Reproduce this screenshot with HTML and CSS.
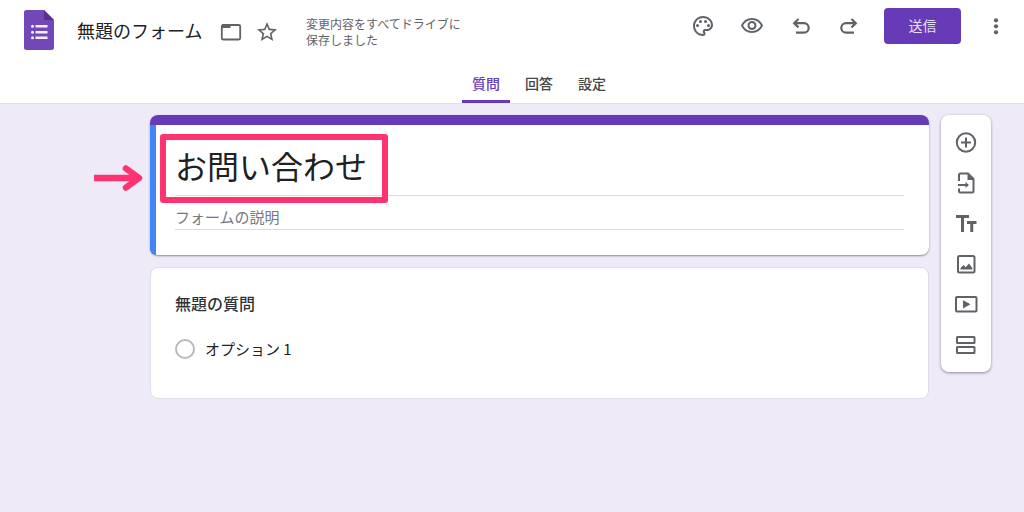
FILE: index.html
```html
<!DOCTYPE html>
<html lang="ja">
<head>
<meta charset="utf-8">
<meta name="viewport" content="width=device-width, initial-scale=1">
<title>無題のフォーム</title>
<link rel="stylesheet" href="styles.css">
</head>
<body>
<header class="header">
  <div class="topbar">
    <a class="logo" href="#" aria-label="フォームのホーム">
      <svg width="30" height="40" viewBox="0 0 30 40"><path fill="#7248b9" d="M2.500 0H20l10 10v27.500a2.500 2.500 0 0 1-2.500 2.500h-25A2.500 2.500 0 0 1 0 37.500v-35A2.500 2.500 0 0 1 2.500 0z"/><path fill="#54318f" d="M20 0l10 10H20z"/><path fill="#f4effa" d="M11.500 15h12v2.500h-12zM11.500 21h12v2.500h-12zM11.500 26.500h12V29h-12z"/><g fill="#f4effa"><circle cx="8.500" cy="16.200" r="1.500"/><circle cx="8.500" cy="22.200" r="1.500"/><circle cx="8.500" cy="27.800" r="1.500"/></g></svg>
    </a>
    <input class="doc-name" type="text" value="無題のフォーム" aria-label="ドキュメント名">
    <button class="icon-btn" type="button" aria-label="フォルダに移動">
      <svg width="24" height="24" viewBox="0 0 24 24"><rect x="2.800" y="5" width="18.400" height="14.500" rx="1.500" fill="none" stroke="#5f6368" stroke-width="1.800"/><path fill="#5f6368" d="M3.500 4h6l2 2v2H3V5z"/></svg>
    </button>
    <button class="icon-btn" type="button" aria-label="スターを付ける">
      <svg width="24" height="24" viewBox="0 0 24 24"><path fill="#5f6368" d="M22 9.240l-7.190-.62L12 2 9.190 8.630 2 9.240l5.460 4.730L5.820 21 12 17.270 18.180 21l-1.630-7.030L22 9.240zM12 15.400l-3.760 2.270 1-4.280-3.320-2.880 4.380-.38L12 6.100l1.710 4.040 4.380.38-3.320 2.880 1 4.280L12 15.400z"/></svg>
    </button>
    <p class="save-state">変更内容をすべてドライブに保存しました</p>
    <div class="actions">
      <button class="icon-btn" type="button" aria-label="テーマをカスタマイズ">
        <svg width="24" height="24" viewBox="0 0 24 24"><path fill="#5f6368" d="M12 22C6.490 22 2 17.510 2 12S6.490 2 12 2s10 4.040 10 9c0 3.310-2.690 6-6 6h-1.770c-.28 0-.5.22-.5.5 0 .12.050.23.130.33.410.47.640 1.060.640 1.670A2.500 2.500 0 0 1 12 22zm0-18c-4.410 0-8 3.590-8 8s3.590 8 8 8c.28 0 .5-.22.5-.5a.54.54 0 0 0-.14-.35c-.41-.46-.63-1.050-.63-1.650a2.500 2.500 0 0 1 2.500-2.500H16c2.210 0 4-1.790 4-4 0-3.860-3.590-7-8-7z"/><g fill="#5f6368"><circle cx="6.500" cy="11.500" r="1.500"/><circle cx="9.500" cy="7.500" r="1.500"/><circle cx="14.500" cy="7.500" r="1.500"/><circle cx="17.500" cy="11.500" r="1.500"/></g></svg>
      </button>
      <button class="icon-btn" type="button" aria-label="プレビュー">
        <svg width="24" height="24" viewBox="0 0 24 24"><path fill="#5f6368" d="M12 6c3.790 0 7.170 2.130 8.820 5.500C19.170 14.870 15.790 17 12 17s-7.170-2.130-8.820-5.500C4.830 8.130 8.210 6 12 6m0-2C7 4 2.730 7.110 1 11.500 2.730 15.890 7 19 12 19s9.270-3.110 11-7.500C21.270 7.110 17 4 12 4zm0 5a2.500 2.500 0 0 1 0 5 2.500 2.500 0 0 1 0-5m0-2c-2.480 0-4.500 2.020-4.500 4.500S9.520 16 12 16s4.500-2.020 4.500-4.500S14.480 7 12 7z"/></svg>
      </button>
      <button class="icon-btn" type="button" aria-label="元に戻す">
        <svg width="24" height="24" viewBox="0 0 24 24" fill="none" stroke="#5f6368" stroke-width="2.200"><path d="M9.500 5L5.200 9.200l4.300 4.200M5 9.200h10a4.700 4.700 0 0 1 0 9.400H7"/></svg>
      </button>
      <button class="icon-btn" type="button" aria-label="やり直す">
        <svg width="24" height="24" viewBox="0 0 24 24" fill="none" stroke="#5f6368" stroke-width="2.200"><path d="M13.500 5l4.300 4.200-4.300 4.200M18 9.200H8a4.700 4.700 0 0 0 0 9.400h8"/></svg>
      </button>
    </div>
    <button class="send" type="button">送信</button>
    <button class="icon-btn more" type="button" aria-label="その他">
      <svg width="24" height="24" viewBox="0 0 24 24" fill="#5f6368"><circle cx="12" cy="6.300" r="2.100"/><circle cx="12" cy="12.300" r="2.100"/><circle cx="12" cy="18.300" r="2.100"/></svg>
    </button>
  </div>
  <nav class="tabs">
    <a class="tab tab-active" href="#questions">質問</a>
    <a class="tab" href="#responses">回答</a>
    <a class="tab" href="#settings">設定</a>
  </nav>
</header>
<main class="editor">
  <div class="cards">
    <section class="card title-card">
      <div class="title-field">
        <input class="form-title" type="text" value="お問い合わせ" aria-label="フォームのタイトル">
        <span class="highlight"></span>
        <svg class="arrow" width="50" height="28" viewBox="0 0 50 28" fill="none" stroke="#ff3370" stroke-width="6.500"><path d="M0 14h44"/><path stroke-linecap="round" stroke-linejoin="round" d="M32 4.500L45 14 32 23.500"/></svg>
      </div>
      <input class="form-desc" type="text" placeholder="フォームの説明" aria-label="フォームの説明">
    </section>
    <section class="card question-card">
      <h2 class="question">無題の質問</h2>
      <label class="option"><input class="radio" type="radio" name="q1">オプション 1</label>
    </section>
  </div>
  <aside class="toolbar">
    <button class="icon-btn" type="button" aria-label="質問を追加">
      <svg width="24" height="24" viewBox="0 0 24 24" fill="none" stroke="#5f6368" stroke-width="2"><circle cx="12" cy="12.500" r="9.200"/><path d="M12 7.500v10M7 12.500h10"/></svg>
    </button>
    <button class="icon-btn" type="button" aria-label="質問をインポート">
      <svg width="24" height="24" viewBox="0 0 24 24" fill="none" stroke="#5f6368" stroke-width="2"><path d="M5 10V4a1.500 1.500 0 0 1 1.500-1.500H14L19.500 8v12a1.500 1.500 0 0 1-1.500 1.500H6.500A1.500 1.500 0 0 1 5 20v-2.500M4 14h9"/><path fill="#5f6368" stroke="none" d="M11.500 11l3.500 3-3.500 3zM13.500 3v6H20z"/></svg>
    </button>
    <button class="icon-btn" type="button" aria-label="タイトルと説明を追加">
      <svg width="24" height="24" viewBox="0 0 24 24" fill="none" stroke="#5f6368" stroke-width="3"><path d="M2 5.500h13M8.500 5.500v15.500M13 11.500h9.500M17.750 11.500V21"/></svg>
    </button>
    <button class="icon-btn" type="button" aria-label="画像を追加">
      <svg width="24" height="24" viewBox="0 0 24 24"><rect x="4" y="4" width="16.500" height="16.500" rx="1.500" fill="none" stroke="#5f6368" stroke-width="2"/><path fill="#5f6368" d="M6.500 17.500v-1.500l3-3 2.200 2.200 3.300-3.700 3.300 4.500v1.500z"/></svg>
    </button>
    <button class="icon-btn" type="button" aria-label="動画を追加">
      <svg width="24" height="24" viewBox="0 0 24 24"><rect x="2" y="5" width="20.500" height="14.500" rx="1" fill="none" stroke="#5f6368" stroke-width="2"/><path fill="#5f6368" d="M9 8.200l7.500 4.100L9 16.400z"/></svg>
    </button>
    <button class="icon-btn" type="button" aria-label="セクションを追加">
      <svg width="24" height="24" viewBox="0 0 24 24" fill="none" stroke="#5f6368" stroke-width="2"><rect x="3" y="4" width="17.500" height="6" rx=".5"/><rect x="3" y="14" width="17.500" height="6" rx=".5"/></svg>
    </button>
  </aside>
</main>
</body>
</html>
```
FILE: styles.css
```css
* {
  box-sizing: border-box;
}

body {
  margin: 0;
  min-height: 100vh;
  background: #eeeaf7;
  color: #202124;
  font-family: "Noto Sans CJK JP", sans-serif;
}

button,
input {
  margin: 0;
  padding: 0;
  border: 0;
  background: none;
  color: inherit;
  font-family: inherit;
}

a {
  text-decoration: none;
}

.header {
  background: #fff;
  border-bottom: 1px solid #e3e1ea;
}

.topbar {
  display: flex;
  align-items: flex-start;
  height: 66px;
  padding: 8px 16px 0 24px;
}

.logo {
  display: flex;
  margin-top: 2px;
}

.doc-name {
  width: 130px;
  height: 26px;
  margin: 9px 12px 0 23px;
  font-size: 18px;
  line-height: 26px;
}

.icon-btn {
  display: grid;
  place-items: center;
  width: 24px;
  height: 24px;
}

.topbar > .icon-btn {
  margin: 12px 12px 0 0;
}

.save-state {
  width: 164px;
  margin: 8px 0 0 15px;
  color: #5f6368;
  font-size: 12px;
  line-height: 16px;
}

.actions {
  display: flex;
  gap: 25px;
  margin: 6px 22px 0 auto;
}

.send {
  width: 77px;
  height: 36px;
  padding-bottom: 2px;
  border-radius: 4px;
  background: #673ab7;
  color: #e9e0f5;
  font-size: 14px;
}

.topbar > .more {
  margin: 6px 0 0 23px;
}

.tabs {
  display: flex;
  justify-content: center;
  gap: 5px;
  padding-left: 54px;
}

.tab {
  width: 48px;
  height: 37px;
  border-bottom: 3px solid transparent;
  color: #444649;
  font-size: 14px;
  font-weight: 500;
  line-height: 34px;
  text-align: center;
}

.tab-active {
  border-color: #673ab7;
  border-radius: 3px 3px 0 0;
  color: #673ab7;
}

.editor {
  display: flex;
  align-items: flex-start;
  gap: 12px;
  padding: 11px 33px 24px 150px;
}

.cards {
  display: grid;
  flex: 1;
  gap: 12px;
}

.card {
  border-radius: 8px;
  background: #fff;
}

.title-card {
  position: relative;
  padding: 20px 25px 25px;
  box-shadow: 0 1px 2px #8d8a96;
}

.title-card::before,
.title-card::after {
  content: "";
  position: absolute;
  left: 0;
}

.title-card::before {
  top: 10px;
  bottom: 0;
  width: 6px;
  border-radius: 0 0 0 8px;
  background: #4285f4;
}

.title-card::after {
  top: 0;
  right: 0;
  height: 10px;
  border-radius: 8px 8px 0 0;
  background: #673ab7;
}

.title-field {
  position: relative;
}

.form-title,
.form-desc {
  display: block;
  width: 100%;
  border-bottom: 1px solid #dcdcdf;
}

.form-title {
  height: 61px;
  font-size: 32px;
  line-height: 48px;
}

.form-desc {
  height: 34px;
  padding-top: 7px;
  font-size: 15px;
}

.form-desc::placeholder {
  color: #75797e;
  opacity: 1;
}

.highlight {
  position: absolute;
  top: -1px;
  left: -15px;
  width: 228px;
  height: 69px;
  border: 6px solid #ff3370;
  border-radius: 3px;
  pointer-events: none;
}

.arrow {
  position: absolute;
  top: 29px;
  left: -81px;
}

.question-card {
  padding: 23px 24px 36px;
  border: 1px solid #dfdce8;
}

.question {
  margin: 0 0 20px;
  color: #303236;
  font-size: 16px;
  font-weight: 500;
  line-height: 24px;
}

.option {
  display: flex;
  align-items: center;
  gap: 10px;
  height: 27px;
  font-size: 15px;
  line-height: 24px;
}

.radio {
  width: 20px;
  height: 20px;
  border: 2px solid #b9b9b9;
  border-radius: 50%;
  appearance: none;
}

.toolbar {
  display: grid;
  grid-auto-rows: 1fr;
  place-items: center;
  width: 50px;
  min-height: 257px;
  padding: 7px 0;
  border-radius: 8px;
  background: #fff;
  box-shadow: 0 1px 3px #8d8a96;
}
```
